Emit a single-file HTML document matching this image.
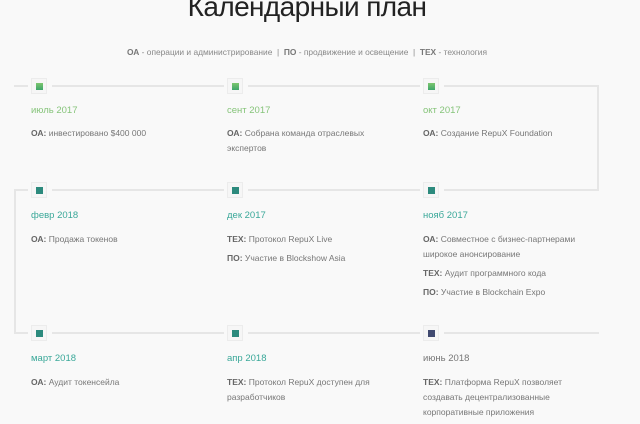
<!DOCTYPE html>
<html><head><meta charset="utf-8"><style>
body{margin:0;width:640px;height:423px;background:#f9f9f9;font-family:"Liberation Sans","Noto Sans CJK SC",sans-serif;overflow:hidden;position:relative;color:#777}
.a{position:absolute}
h1{position:absolute;left:0;width:614px;top:-9px;margin:0;text-align:center;font-weight:300;font-size:28px;color:#222;letter-spacing:-0.6px}
.leg{top:47px;left:0;width:614px;text-align:center;font-size:8.4px;color:#888}
.leg b{color:#777}
.h{height:2px;background:#e6e6e6}
.v{width:2px;background:#e6e6e6}
.m{width:16px;height:16px;background:#f6f6f6;border:1px solid #ececec;box-sizing:border-box}
.m i{position:absolute;left:4px;top:4px;width:7px;height:7px}
.g{background:linear-gradient(#7cc66f,#3fa66a)}
.t{background:#2c8a7d}
.n{background:#404a70}
.d{font-size:9.5px}
.dg{color:#86c47a}.dt{color:#3aa899}
.x{font-size:8.5px;line-height:15px;color:#777;width:160px}
.x b{color:#666}
.x p{margin:0 0 4px}
</style></head><body>
<h1>Календарный план</h1>
<div class="a leg"><b>ОА</b> - операции и администрирование &nbsp;| &nbsp;<b>ПО</b> - продвижение и освещение &nbsp;| &nbsp;<b>ТЕХ</b> - технология</div>

<div class="a h" style="left:14px;top:85px;width:14px"></div>
<div class="a h" style="left:52px;top:85px;width:172px"></div>
<div class="a h" style="left:248px;top:85px;width:172px"></div>
<div class="a h" style="left:444px;top:85px;width:155px"></div>
<div class="a v" style="left:597px;top:85px;height:106px"></div>

<div class="a h" style="left:14px;top:189px;width:14px"></div>
<div class="a h" style="left:52px;top:189px;width:172px"></div>
<div class="a h" style="left:248px;top:189px;width:172px"></div>
<div class="a h" style="left:444px;top:189px;width:155px"></div>
<div class="a v" style="left:14px;top:189px;height:144px"></div>

<div class="a h" style="left:14px;top:332px;width:14px"></div>
<div class="a h" style="left:52px;top:332px;width:172px"></div>
<div class="a h" style="left:248px;top:332px;width:172px"></div>
<div class="a h" style="left:444px;top:332px;width:155px"></div>

<div class="a m" style="left:31px;top:78px"><i class="g"></i></div>
<div class="a m" style="left:227px;top:78px"><i class="g"></i></div>
<div class="a m" style="left:423px;top:78px"><i class="g"></i></div>
<div class="a m" style="left:31px;top:182px"><i class="t"></i></div>
<div class="a m" style="left:227px;top:182px"><i class="t"></i></div>
<div class="a m" style="left:423px;top:182px"><i class="t"></i></div>
<div class="a m" style="left:31px;top:325px"><i class="t"></i></div>
<div class="a m" style="left:227px;top:325px"><i class="t"></i></div>
<div class="a m" style="left:423px;top:325px"><i class="n"></i></div>

<div class="a d dg" style="left:31px;top:105px">июль 2017</div>
<div class="a d dg" style="left:227px;top:105px">сент 2017</div>
<div class="a d dg" style="left:423px;top:105px">окт 2017</div>
<div class="a x" style="left:31px;top:126px"><p><b>ОА:</b> инвестировано $400 000</p></div>
<div class="a x" style="left:227px;top:126px"><p><b>ОА:</b> Собрана команда отраслевых экспертов</p></div>
<div class="a x" style="left:423px;top:126px"><p><b>ОА:</b> Создание RepuX Foundation</p></div>

<div class="a d dt" style="left:31px;top:210px">февр 2018</div>
<div class="a d dt" style="left:227px;top:210px">дек 2017</div>
<div class="a d dt" style="left:423px;top:210px">нояб 2017</div>
<div class="a x" style="left:31px;top:232px"><p><b>ОА:</b> Продажа токенов</p></div>
<div class="a x" style="left:227px;top:232px"><p><b>ТЕХ:</b> Протокол RepuX Live</p><p><b>ПО:</b> Участие в Blockshow Asia</p></div>
<div class="a x" style="left:423px;top:232px;width:170px"><p><b>ОА:</b> Совместное с бизнес-партнерами широкое анонсирование</p><p><b>ТЕХ:</b> Аудит программного кода</p><p><b>ПО:</b> Участие в Blockchain Expo</p></div>

<div class="a d dt" style="left:31px;top:353px">март 2018</div>
<div class="a d dt" style="left:227px;top:353px">апр 2018</div>
<div class="a d" style="left:423px;top:353px;color:#777">июнь 2018</div>
<div class="a x" style="left:31px;top:375px"><p><b>ОА:</b> Аудит токенсейла</p></div>
<div class="a x" style="left:227px;top:375px"><p><b>ТЕХ:</b> Протокол RepuX доступен для разработчиков</p></div>
<div class="a x" style="left:423px;top:375px"><p><b>ТЕХ:</b> Платформа RepuX позволяет создавать децентрализованные корпоративные приложения</p></div>
</body></html>
